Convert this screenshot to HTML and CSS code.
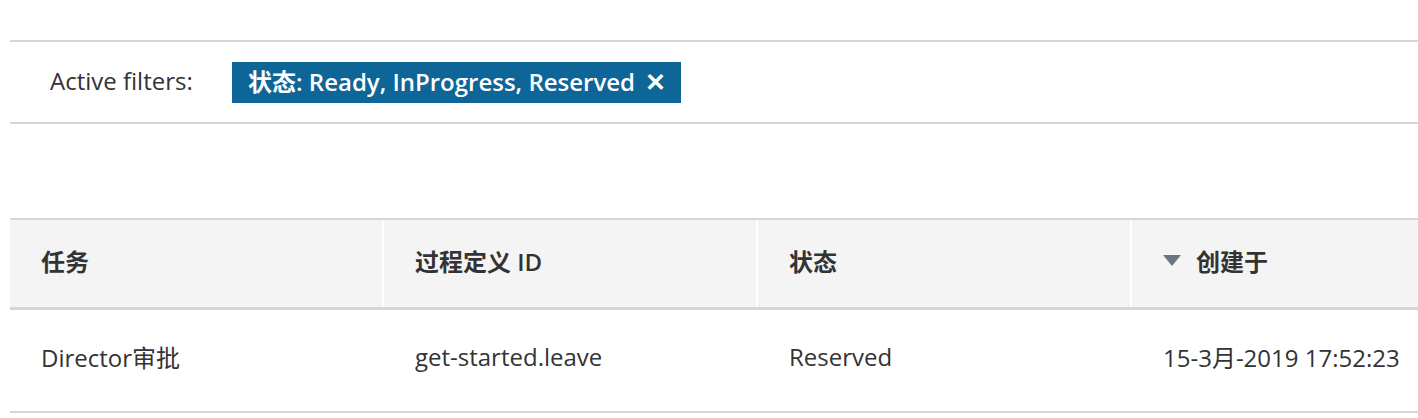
FILE: index.html
```html
<!DOCTYPE html>
<html>
<head>
<meta charset="utf-8">
<link rel="stylesheet" href="styles.css">
</head>
<body>
<div class="page">
  <div class="filters">
    <span class="filters-label">Active filters:</span>
    <span class="chip">状态: Ready, InProgress, Reserved <span class="chip-x">✕</span></span>
  </div>
  <div class="table">
    <div class="row head">
      <div class="cell">任务</div>
      <div class="cell">过程定义 ID</div>
      <div class="cell">状态</div>
      <div class="cell"><span class="sort"></span>创建于</div>
    </div>
    <div class="row body">
      <div class="cell">Director审批</div>
      <div class="cell">get-started.leave</div>
      <div class="cell">Reserved</div>
      <div class="cell">15-3月-2019 17:52:23</div>
    </div>
  </div>
</div>
</body>
</html>
```
FILE: styles.css
```css
html, body {
  margin: 0;
  background: #fff;
}
body {
  font-family: "Open Sans", "Noto Sans CJK SC", sans-serif;
  color: #333;
  font-size: 24px;
}
.page {
  padding: 40px 0 0 10px;
}
.filters {
  height: 80px;
  border-top: 2px solid #d6d6d6;
  border-bottom: 2px solid #d6d6d6;
  display: flex;
  align-items: center;
  padding-left: 40px;
}
.filters-label {
  width: 182px;
  color: #333;
  padding-bottom: 3px;
}
.chip {
  background: #0e6597;
  color: #fff;
  font-weight: 600;
  height: 41px;
  box-sizing: border-box;
  display: inline-flex;
  align-items: center;
  padding: 0 15px 3px 16px;
  white-space: pre;
}
.chip-x {
  font-weight: 600;
  margin-left: 4px;
  font-size: 25px;
}
.table {
  margin-top: 94px;
  border-top: 2px solid #d6d6d6;
}
.row {
  display: grid;
  grid-template-columns: 374px 374px 374px 1fr;
}
.row.head {
  background: #f4f4f4;
  height: 87px;
  border-bottom: 3px solid #d6d6d6;
}
.row.head .cell {
  border-right: 2px solid #fff;
  padding-bottom: 6px;
}
.row.head .cell:last-child {
  border-right: 0;
}
.row.body {
  height: 101px;
  border-bottom: 2px solid #d6d6d6;
}
.row.body .cell {
  padding-bottom: 8px;
}
.cell {
  display: flex;
  align-items: center;
  padding-left: 31px;
  white-space: nowrap;
  box-sizing: border-box;
}
.row.head .cell {
  font-weight: 600;
}
.sort {
  width: 0;
  height: 0;
  border-left: 9px solid transparent;
  border-right: 9px solid transparent;
  border-top: 11px solid #6a7684;
  margin-right: 15px;
}
```
